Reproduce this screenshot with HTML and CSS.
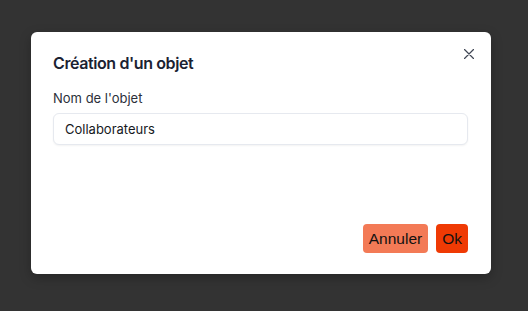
FILE: index.html
```html
<!DOCTYPE html>
<html lang="fr">
<head>
<meta charset="utf-8">
<title>Création d'un objet</title>
<link rel="stylesheet" href="styles.css">
</head>
<body>
<div class="dialog">
  <button class="close" aria-label="Fermer">
    <svg width="10" height="10" viewBox="0 0 10 10"><path d="M0.5 0.5L9.5 9.5M9.5 0.5L0.5 9.5" stroke="#3f4654" stroke-width="1.2" fill="none" stroke-linecap="round"/></svg>
  </button>
  <h2 class="title">Création d'un objet</h2>
  <label class="label" for="name">Nom de l'objet</label>
  <input class="input" id="name" type="text" value="Collaborateurs">
  <div class="footer">
    <button class="btn btn-cancel">Annuler</button>
    <button class="btn btn-ok">Ok</button>
  </div>
</div>
</body>
</html>
```
FILE: styles.css
```css
html, body {
  margin: 0;
  padding: 0;
}
body {
  background: #333333;
  width: 528px;
  height: 311px;
  overflow: hidden;
  font-family: Inter, "Liberation Sans", sans-serif;
}
.dialog {
  position: relative;
  box-sizing: border-box;
  margin: 32px 0 0 31px;
  width: 460px;
  height: 242px;
  background: #ffffff;
  border-radius: 6px;
  padding: 19px 23px 21px 22px;
  display: flex;
  flex-direction: column;
  box-shadow: 0 4px 12px rgba(0,0,0,0.25);
}
.close {
  position: absolute;
  top: 16px;
  right: 17px;
  width: 11px;
  height: 11px;
  padding: 0;
  border: 0;
  background: transparent;
  display: flex;
  align-items: center;
  justify-content: center;
}
.title {
  margin: 0;
  font-size: 16px;
  line-height: 24px;
  font-weight: 600;
  color: #1b2232;
  letter-spacing: -0.4px;
}
.label {
  display: block;
  margin-top: 13px;
  font-size: 13px;
  line-height: 20px;
  color: #2b303a;
}
.input {
  box-sizing: border-box;
  margin-top: 5px;
  width: 100%;
  height: 32px;
  border: 1px solid #e6e9ef;
  border-radius: 6px;
  padding: 0 11px;
  font-family: Inter, sans-serif;
  font-size: 13px;
  color: #16181d;
  box-shadow: 0 1px 2px rgba(0,0,0,0.05);
  outline: none;
}
.footer {
  margin-top: auto;
  display: flex;
  justify-content: flex-end;
  gap: 8px;
}
.btn {
  border: 0;
  border-radius: 4px;
  padding: 5px 6px;
  font-family: "Liberation Sans", Arial, sans-serif;
  font-size: 15.5px;
  line-height: 19px;
  color: #111111;
}
.btn-cancel {
  background: #f37a56;
}
.btn-ok {
  background: #ef3a04;
}
```
